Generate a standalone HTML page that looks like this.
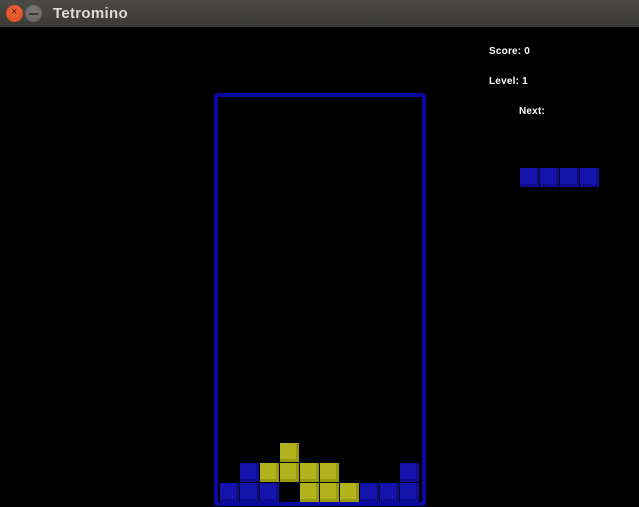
<!DOCTYPE html>
<html><head><style>
*{margin:0;padding:0;box-sizing:border-box}
body{width:639px;height:507px;background:#000;position:relative;overflow:hidden;font-family:"Liberation Sans",sans-serif}
#tb{position:absolute;left:0;top:0;width:639px;height:27px;background:linear-gradient(#4b4a45,#3a3935);}
.btn{position:absolute;top:5px;width:17px;height:17px;border-radius:50%}
#title{position:absolute;left:53px;top:5px;color:#dfdbd2;font-weight:bold;font-size:15px;letter-spacing:0.3px}
.t{position:absolute;color:#fff;font-weight:bold;font-size:10px;letter-spacing:0.2px}
#board{position:absolute;left:214px;top:93px;width:212px;height:413px;border:4px solid #0a0aa0;border-radius:3px}
.c{position:absolute;width:19px;height:19px}
.b{background:#1414ac;box-shadow:inset -3px -3px 0 #0d0d94}
.y{background:#b2b21c;box-shadow:inset -3px -3px 0 #9a9a0e}
</style></head><body>
<div id="tb">
<div class="btn" style="left:6px;background:radial-gradient(circle at 50% 40%,#f0683c,#d7451b)"><span style="position:absolute;left:5px;top:1px;font-size:11px;color:#4a1a0a">×</span></div>
<div class="btn" style="left:25px;background:radial-gradient(circle at 50% 40%,#7d7c78,#5e5d59)"><span style="position:absolute;left:4px;top:8px;width:9px;height:2px;background:#3a3936"></span></div>
<div id="title">Tetromino</div>
</div>
<div class="t" style="left:489px;top:46px">Score: 0</div>
<div class="t" style="left:489px;top:76px">Level: 1</div>
<div class="t" style="left:519px;top:106px">Next:</div>
<div class="c b" style="left:520px;top:168px"></div>
<div class="c b" style="left:540px;top:168px"></div>
<div class="c b" style="left:560px;top:168px"></div>
<div class="c b" style="left:580px;top:168px"></div>
<div id="board"></div>
<div class="c y" style="left:280px;top:443px"></div>
<div class="c b" style="left:240px;top:463px"></div>
<div class="c y" style="left:260px;top:463px"></div>
<div class="c y" style="left:280px;top:463px"></div>
<div class="c y" style="left:300px;top:463px"></div>
<div class="c y" style="left:320px;top:463px"></div>
<div class="c b" style="left:400px;top:463px"></div>
<div class="c b" style="left:220px;top:483px"></div>
<div class="c b" style="left:240px;top:483px"></div>
<div class="c b" style="left:260px;top:483px"></div>
<div class="c y" style="left:300px;top:483px"></div>
<div class="c y" style="left:320px;top:483px"></div>
<div class="c y" style="left:340px;top:483px"></div>
<div class="c b" style="left:360px;top:483px"></div>
<div class="c b" style="left:380px;top:483px"></div>
<div class="c b" style="left:400px;top:483px"></div>
</body></html>
